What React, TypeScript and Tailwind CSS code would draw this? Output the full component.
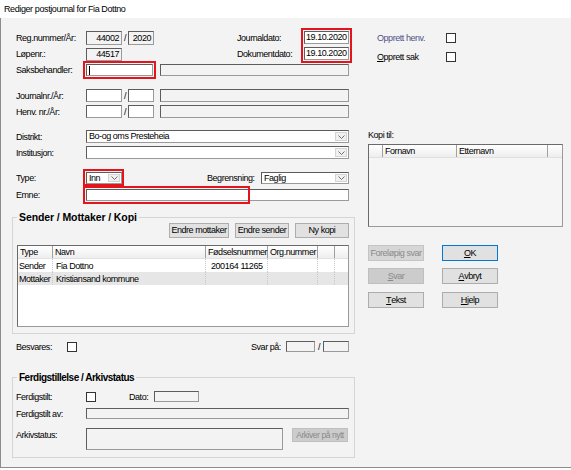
import React from "react";

// sunken win32 edit box
function Field({
  className = "",
  white = false,
  right = false,
  children,
}: {
  className?: string;
  white?: boolean;
  right?: boolean;
  children?: React.ReactNode;
}) {
  return (
    <div
      className={`box-border shrink-0 border border-[#9a9a9a] border-t-[#5c5c5c] border-l-[#5c5c5c] flex items-center px-[2px] leading-none overflow-hidden whitespace-nowrap ${
        white ? "bg-white" : "bg-[#f3f3f3]"
      } ${right ? "justify-end" : ""} ${className}`}
    >
      {children}
    </div>
  );
}

function Combo({ className = "", text = "" }: { className?: string; text?: string }) {
  return (
    <div
      className={`box-border shrink-0 flex border border-[#9a9a9a] border-t-[#5c5c5c] border-l-[#5c5c5c] bg-white ${className}`}
    >
      <div className="flex-1 px-[2px] flex items-center leading-none whitespace-nowrap overflow-hidden">
        {text}
      </div>
      <div className="w-[12px] my-px mr-px bg-[#f0f0f0] border border-[#d4d4d4] flex items-center justify-center">
        <svg width="7" height="4" viewBox="0 0 7 4">
          <path d="M0.5 0.5 L3.5 3.5 L6.5 0.5" stroke="#707070" fill="none" />
        </svg>
      </div>
    </div>
  );
}

function Check() {
  return <div className="w-[10px] h-[10px] shrink-0 box-border border border-[#333333] bg-white" />;
}

function Btn({
  className = "",
  children,
  variant = "normal",
}: {
  className?: string;
  children: React.ReactNode;
  variant?: "normal" | "ok" | "off" | "off2";
}) {
  const look =
    variant === "ok"
      ? "bg-[#e1e1e1] border-[#0078d7] text-black"
      : variant === "off"
      ? "bg-[#d6d6d6] border-[#c4c4c4] text-[#8a8a8a]"
      : variant === "off2"
      ? "bg-[#cccccc] border-[#bfbfbf] text-[#8a8a8a]"
      : "bg-[#e1e1e1] border-[#adadad] text-black";
  return (
    <div
      className={`box-border shrink-0 border flex items-center justify-center leading-none whitespace-nowrap ${look} ${className}`}
    >
      {children}
    </div>
  );
}

const red = "absolute border-2 border-[#e3141c] pointer-events-none";

export default function App() {
  return (
    <div className="w-[571px] h-[470px] bg-white text-[9px] tracking-[-0.45px] leading-[12px] text-black whitespace-nowrap font-['Liberation_Sans',Arial,sans-serif]">
      {/* title bar */}
      <div className="h-[18px] flex items-center pl-[4px] text-[9px] tracking-[-0.4px]">
        Rediger postjournal for Fia Dottno
      </div>

      <div className="h-[450px] bg-[#f3f3f3] border-l border-b border-[#8c8c8c] flex">
        {/* left column */}
        <div className="w-[360px] shrink-0 pl-[15px] flex flex-col">
          {/* reg / løpenr / dates */}
          <div className="mt-[13px] flex items-start">
            <div className="w-[288px] flex flex-col gap-[2px]">
              <div className="h-[14px] flex items-center">
                <div className="w-[70px] shrink-0">Reg.nummer/År:</div>
                <Field right className="w-[36px] h-[14px]">44002</Field>
                <div className="w-[6px] text-center">/</div>
                <Field right className="w-[26px] h-[14px]">2020</Field>
                <div className="ml-auto w-[67px]">Journaldato:</div>
              </div>
              <div className="h-[14px] flex items-center">
                <div className="w-[70px] shrink-0">Løpenr.:</div>
                <Field right className="w-[36px] h-[13px]">44517</Field>
                <div className="ml-auto w-[67px]">Dokumentdato:</div>
              </div>
            </div>
            <div className="relative w-[45px] flex flex-col gap-[3px]">
              <Field white className="w-[45px] h-[13px] px-px">19.10.2020</Field>
              <Field white className="w-[45px] h-[13px] px-px">19.10.2020</Field>
              <div className={`${red} -inset-[3px]`} />
            </div>
          </div>

          {/* saksbehandler */}
          <div className="mt-[3px] h-[12px] flex items-center">
            <div className="w-[70px] shrink-0">Saksbehandler:</div>
            <div className="relative">
              <Field white className="w-[67px] h-[12px]">
                <div className="w-px h-[9px] bg-black" />
              </Field>
              <div className={`${red} -inset-[3px]`} />
            </div>
            <Field className="ml-[7px] w-[189px] h-[12px]" />
          </div>

          {/* journalnr */}
          <div className="mt-[13px] h-[13px] flex items-center">
            <div className="w-[70px] shrink-0">Journalnr./År:</div>
            <Field white className="w-[36px] h-[13px]" />
            <div className="w-[6px] text-center">/</div>
            <Field white className="w-[26px] h-[13px]" />
            <Field className="ml-[6px] w-[189px] h-[13px]" />
          </div>
          <div className="mt-[3px] h-[13px] flex items-center">
            <div className="w-[70px] shrink-0">Henv. nr./År:</div>
            <Field white className="w-[36px] h-[13px]" />
            <div className="w-[6px] text-center">/</div>
            <Field white className="w-[26px] h-[13px]" />
            <Field className="ml-[6px] w-[189px] h-[13px]" />
          </div>

          {/* distrikt / institusjon */}
          <div className="mt-[12px] h-[13px] flex items-center">
            <div className="w-[70px] shrink-0">Distrikt:</div>
            <Combo className="w-[263px] h-[13px]" text="Bo-og oms Presteheia" />
          </div>
          <div className="mt-[3px] h-[13px] flex items-center">
            <div className="w-[70px] shrink-0">Institusjon:</div>
            <Combo className="w-[263px] h-[13px]" />
          </div>

          {/* type / begrensning */}
          <div className="mt-[13px] h-[12px] flex items-center">
            <div className="w-[70px] shrink-0">Type:</div>
            <div className="relative">
              <Combo className="w-[36px] h-[12px]" text="Inn" />
              <div className={`${red} -top-[3px] -left-[3px] -right-[2px] -bottom-[2px]`} />
            </div>
            <div className="ml-[85px] w-[54px] shrink-0">Begrensning:</div>
            <Combo className="w-[88px] h-[12px]" text="Faglig" />
          </div>

          {/* emne */}
          <div className="mt-[5px] h-[12px] flex items-center">
            <div className="w-[70px] shrink-0">Emne:</div>
            <div className="relative">
              <Field white className="w-[263px] h-[12px]" />
              <div className={`${red} -top-[3px] -left-[3px] w-[167px] h-[18px]`} />
            </div>
          </div>

          {/* sender / mottaker / kopi */}
          <fieldset className="mt-[11px] -ml-[4px] w-[343px] h-[122px] border border-[#d5d5d5]">
            <legend className="ml-[4px] px-[2px] font-bold text-[10.5px] tracking-[-0.1px] leading-[11px]">
              Sender / Mottaker / Kopi
            </legend>
            <div className="flex justify-end gap-[6px] pr-[5px]">
              <Btn className="w-[60px] h-[15px]">Endre mottaker</Btn>
              <Btn className="w-[54px] h-[15px]">Endre sender</Btn>
              <Btn className="w-[54px] h-[15px]">Ny kopi</Btn>
            </div>
            <div className="mt-[7px] ml-[4px] w-[332px] h-[82px] box-border border border-[#9a9a9a] border-t-[#6a6a6a] border-l-[#6a6a6a] bg-white flex flex-col">
              <div className="h-[13px] flex leading-[12px] bg-gradient-to-b from-white to-[#eeeeee] border-b border-[#e0e0e0]">
                <div className="w-[35px] pl-[2px] border-r border-[#a0a0a0]">Type</div>
                <div className="w-[153px] pl-[2px] border-r border-[#a0a0a0]">Navn</div>
                <div className="w-[62px] pl-[2px] border-r border-[#a0a0a0]">Fødselsnummer</div>
                <div className="w-[50px] pl-[2px] border-r border-[#a0a0a0]">Org.nummer</div>
                <div className="w-[17px] border-r border-[#a0a0a0]" />
                <div className="flex-1" />
              </div>
              <div className="h-[13px] flex items-center">
                <div className="w-[35px] h-full pl-[1px] border-r border-dotted border-[#c8c8c8] flex items-center">Sender</div>
                <div className="w-[153px] h-full pl-[3px] border-r border-dotted border-[#c8c8c8] flex items-center">Fia Dottno</div>
                <div className="w-[62px] h-full pl-[5px] border-r border-dotted border-[#c8c8c8] flex items-center">200164 11265</div>
                <div className="w-[50px] h-full border-r border-dotted border-[#c8c8c8]" />
                <div className="w-[17px] h-full border-r border-dotted border-[#c8c8c8]" />
              </div>
              <div className="h-[13px] flex items-center bg-[#e6e6e6]">
                <div className="w-[35px] h-full pl-[1px] border-r border-dotted border-[#c8c8c8] flex items-center">Mottaker</div>
                <div className="w-[153px] h-full pl-[3px] border-r border-dotted border-[#c8c8c8] flex items-center">Kristiansand kommune</div>
                <div className="w-[62px] h-full border-r border-dotted border-[#c8c8c8]" />
                <div className="w-[50px] h-full border-r border-dotted border-[#c8c8c8]" />
                <div className="w-[17px] h-full border-r border-dotted border-[#c8c8c8]" />
              </div>
            </div>
          </fieldset>

          {/* besvares / svar på */}
          <div className="mt-[7px] h-[11px] flex items-center">
            <div className="w-[51px] shrink-0">Besvares:</div>
            <Check />
            <div className="ml-[174px] w-[35px] shrink-0">Svar på:</div>
            <Field className="w-[29px] h-[11px]" />
            <div className="w-[8px] text-center">/</div>
            <Field className="w-[26px] h-[11px]" />
          </div>

          {/* ferdigstillelse */}
          <fieldset className="mt-[20px] -ml-[4px] w-[343px] h-[86px] border border-[#d5d5d5]">
            <legend className="ml-[4px] px-[2px] font-bold text-[10px] tracking-[-0.5px] leading-[11px]">
              Ferdigstillelse / Arkivstatus
            </legend>
            <div className="pl-[3px]">
              <div className="mt-[8px] h-[11px] flex items-center">
                <div className="w-[70px] shrink-0">Ferdigstilt:</div>
                <Check />
                <div className="ml-[33px] w-[25px] shrink-0">Dato:</div>
                <Field className="w-[45px] h-[11px]" />
              </div>
              <div className="mt-[6px] h-[11px] flex items-center">
                <div className="w-[70px] shrink-0">Ferdigstilt av:</div>
                <Field className="w-[263px] h-[11px]" />
              </div>
              <div className="mt-[9px] flex items-start">
                <div className="w-[70px] shrink-0 pt-[1px]">Arkivstatus:</div>
                <Field className="w-[197px] h-[22px]" />
                <Btn variant="off2" className="ml-[9px] w-[56px] h-[14px] text-[8.5px]">
                  Arkiver på nytt
                </Btn>
              </div>
            </div>
          </fieldset>
        </div>

        {/* right column */}
        <div className="flex-1 pl-[7px] flex flex-col">
          <div className="mt-[13px] pl-[9px] h-[14px] flex items-center">
            <div className="w-[69px] shrink-0 text-[#50508a]">Opprett henv.</div>
            <Check />
          </div>
          <div className="mt-[5px] pl-[9px] h-[14px] flex items-center">
            <div className="w-[69px] shrink-0">
              <span className="underline">O</span>pprett sak
            </div>
            <Check />
          </div>

          <div className="mt-[65px] h-[12px] flex items-center">Kopi til:</div>
          <div className="mt-[3px] w-[195px] h-[83px] box-border border border-[#9a9a9a] border-t-[#6a6a6a] border-l-[#6a6a6a] bg-[#f5f5f5]">
            <div className="h-[13px] flex leading-[12px] bg-gradient-to-b from-white to-[#eeeeee] border-b border-[#e0e0e0]">
              <div className="w-[14px] border-r border-[#a0a0a0]" />
              <div className="w-[74px] pl-[2px] border-r border-[#a0a0a0]">Fornavn</div>
              <div className="w-[91px] pl-[2px] border-r border-[#a0a0a0]">Etternavn</div>
              <div className="flex-1" />
            </div>
          </div>

          <div className="mt-[18px] flex gap-[18px]">
            <Btn variant="off" className="w-[56px] h-[16px]">Foreløpig svar</Btn>
            <Btn variant="ok" className="w-[56px] h-[16px]">
              <span className="underline">O</span>K
            </Btn>
          </div>
          <div className="mt-[7px] flex gap-[18px]">
            <Btn variant="off2" className="w-[56px] h-[16px]">
              <span className="underline">S</span>var
            </Btn>
            <Btn className="w-[56px] h-[16px]">
              <span className="underline">A</span>vbryt
            </Btn>
          </div>
          <div className="mt-[8px] flex gap-[18px]">
            <Btn className="w-[56px] h-[16px]">
              <span className="underline">T</span>ekst
            </Btn>
            <Btn className="w-[56px] h-[16px]">
              <span className="underline">H</span>jelp
            </Btn>
          </div>
        </div>
      </div>
    </div>
  );
}
